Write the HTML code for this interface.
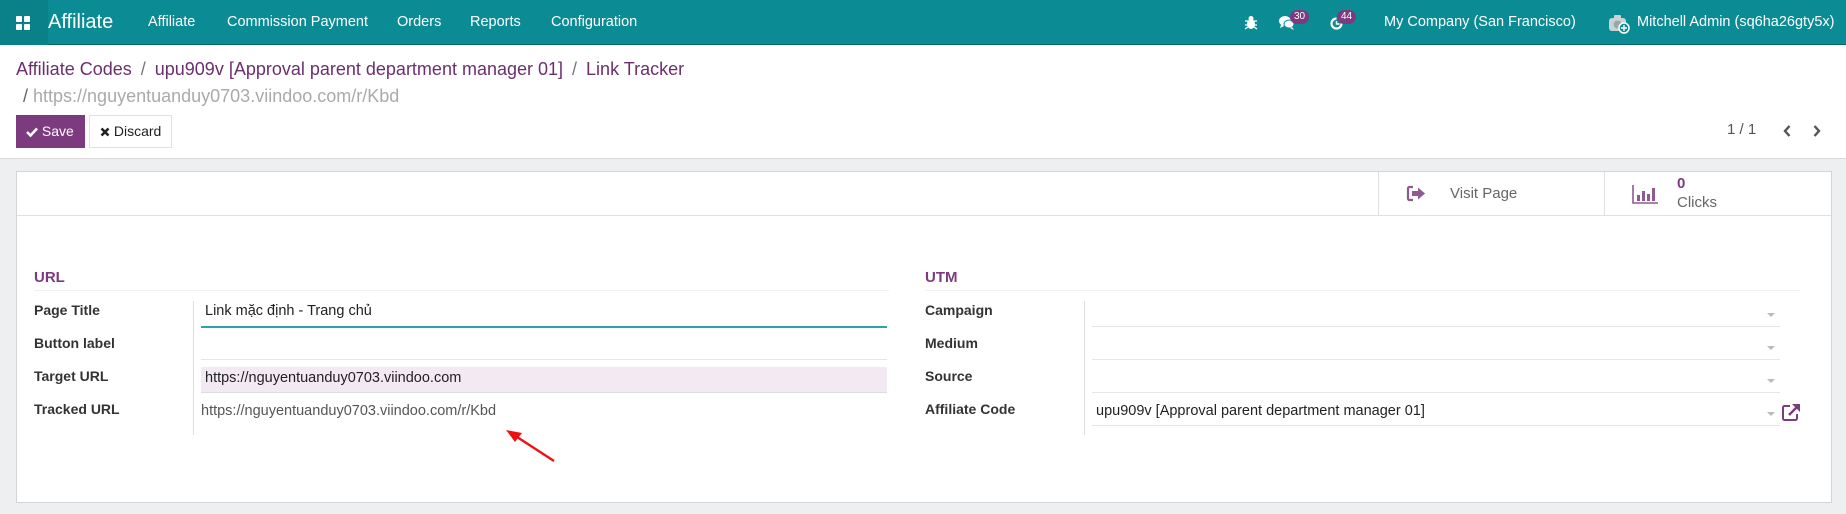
<!DOCTYPE html>
<html><head><meta charset="utf-8"><style>
*{box-sizing:border-box;margin:0;padding:0}
body{width:1846px;height:514px;overflow:hidden;background:#fff;font-family:"Liberation Sans","Noto Sans CJK SC",sans-serif;color:#4c4c4c;position:relative}
.a{position:absolute;white-space:nowrap}
.nav{position:absolute;left:0;top:0;width:1846px;height:45px;background:#0b8c95;border-bottom:1px solid #08666c}
.nav .m{color:#fff;font-size:14.5px;top:14px}
.badge{position:absolute;background:#7c3b7e;color:#fff;font-size:10px;border-radius:8px;padding:1px 4px;line-height:12px}
.lbl{font-size:14px;color:#333;font-weight:bold;left:34px}
.sep{position:absolute;height:1px;background:#e6e6e6}
.caret{position:absolute;width:0;height:0;border-left:4px solid transparent;border-right:4px solid transparent;border-top:4px solid #bbb}
.sl{color:#777;margin:0 9px}
</style></head><body>
<div class="nav">
  <div class="a" style="left:0;top:0;width:48px;height:45px;background:#0a8088"></div>
  <div class="a" style="left:16px;top:16px;width:6px;height:6px;background:#fff;border-radius:1px"></div>
  <div class="a" style="left:24px;top:16px;width:6px;height:6px;background:#fff;border-radius:1px"></div>
  <div class="a" style="left:16px;top:24px;width:6px;height:6px;background:#fff;border-radius:1px"></div>
  <div class="a" style="left:24px;top:24px;width:6px;height:6px;background:#fff;border-radius:1px"></div>
  <div class="a" style="left:48px;top:11px;color:#fff;font-size:20px">Affiliate</div>
  <div class="a m" style="left:148px">Affiliate</div>
  <div class="a m" style="left:227px">Commission Payment</div>
  <div class="a m" style="left:397px">Orders</div>
  <div class="a m" style="left:470px">Reports</div>
  <div class="a m" style="left:551px">Configuration</div>
  <svg class="a" style="left:1244px;top:15px" width="14" height="15" viewBox="0 0 14 15"><ellipse cx="7" cy="9" rx="4" ry="5" fill="#fff"/><circle cx="7" cy="3.5" r="2.5" fill="#fff"/><path d="M1 6h3M10 6h3M1 10h3M10 10h3M1 14l3-2M13 14l-3-2" stroke="#fff" stroke-width="1.3"/></svg>
  <svg class="a" style="left:1278px;top:14px" width="18" height="17" viewBox="0 0 18 17"><ellipse cx="7" cy="7" rx="6" ry="5" fill="#fff"/><path d="M3 11l-1 3 4-2z" fill="#fff"/><ellipse cx="11" cy="10" rx="5" ry="4" fill="#fff" stroke="#0b8c95" stroke-width="1"/><path d="M14 13l2 3-4-2z" fill="#fff"/></svg>
  <div class="badge" style="left:1290px;top:10px">30</div>
  <svg class="a" style="left:1329px;top:16px" width="15" height="15" viewBox="0 0 15 15"><path d="M12.5 7.5A5 5 0 1 1 7.5 2.5" stroke="#fff" stroke-width="2.2" fill="none"/><path d="M7.5 5v3h3" stroke="#fff" stroke-width="1.5" fill="none"/></svg>
  <div class="badge" style="left:1337px;top:10px">44</div>
  <div class="a m" style="left:1384px">My Company (San Francisco)</div>
  <svg class="a" style="left:1609px;top:14px" width="22" height="20" viewBox="0 0 22 20"><rect x="0" y="4" width="17" height="13" rx="3" fill="#c9d3d6"/><rect x="5" y="1" width="7" height="5" rx="1" fill="#c9d3d6"/><circle cx="8.5" cy="10.5" r="4" fill="#9aa8ac"/><circle cx="15" cy="14" r="5" fill="#0b8c95" stroke="#fff" stroke-width="1.5"/><path d="M15 11v6M12 14h6" stroke="#fff" stroke-width="1.4"/></svg>
  <div class="a m" style="left:1637px">Mitchell Admin (sq6ha26gty5x)</div>
</div>

<div class="a" style="left:16px;top:59px;font-size:18px;color:#6b2f6d">Affiliate Codes<span class="sl">/</span>upu909v [Approval parent department manager 01]<span class="sl">/</span>Link Tracker</div>
<div class="a" style="left:23px;top:86px;font-size:18px;color:#aaa"><span style="color:#666">/</span> https://nguyentuanduy0703.viindoo.com/r/Kbd</div>

<div class="a" style="left:16px;top:115px;width:69px;height:33px;background:#7c3b7e;color:#fff;font-size:14px;line-height:33px;padding-left:10px">
<svg width="12" height="10" viewBox="0 0 12 10" style="vertical-align:-1px"><path d="M1 5l3.5 3.5L11 1.5" stroke="#fff" stroke-width="2.6" fill="none"/></svg> Save</div>
<div class="a" style="left:89px;top:115px;width:83px;height:33px;background:#fff;border:1px solid #dee2e6;color:#222;font-size:14px;line-height:31px;padding-left:10px">
<svg width="10" height="10" viewBox="0 0 10 10" style="vertical-align:-1px"><path d="M1.5 1.5l7 7M8.5 1.5l-7 7" stroke="#222" stroke-width="2.6"/></svg> Discard</div>
<div class="a" style="left:1727px;top:121px;font-size:15px;color:#555">1 / 1</div>
<svg class="a" style="left:1782px;top:124px" width="10" height="14" viewBox="0 0 10 14"><path d="M7.5 2L3 7l4.5 5" stroke="#555" stroke-width="2.4" fill="none"/></svg>
<svg class="a" style="left:1812px;top:124px" width="10" height="14" viewBox="0 0 10 14"><path d="M2.5 2L7 7l-4.5 5" stroke="#555" stroke-width="2.4" fill="none"/></svg>

<div class="a" style="left:0;top:158px;width:1846px;height:356px;background:#eeeff0;border-top:1px solid #dcdcdc"></div>
<div class="a" style="left:16px;top:171px;width:1816px;height:332px;background:#fff;border:1px solid #d5d5d5"></div>
<div class="sep" style="left:17px;top:215px;width:1814px;background:#e0e0e0"></div>
<div class="a" style="left:1378px;top:172px;width:1px;height:43px;background:#e0e0e0"></div>
<div class="a" style="left:1604px;top:172px;width:1px;height:43px;background:#e0e0e0"></div>
<svg class="a" style="left:1406px;top:185px" width="21" height="17" viewBox="0 0 21 17"><path d="M7 2H3.5A1.5 1.5 0 0 0 2 3.5v10A1.5 1.5 0 0 0 3.5 15H7" stroke="#8e5a90" stroke-width="2.2" fill="none"/><path d="M6 6h6V2.5l7 6-7 6V11H6z" fill="#8e5a90"/></svg>
<div class="a" style="left:1450px;top:185px;font-size:15px;color:#666">Visit Page</div>
<svg class="a" style="left:1632px;top:185px" width="26" height="19" viewBox="0 0 26 19"><path d="M1 0v18h25" stroke="#8e5a90" stroke-width="1.6" fill="none"/><rect x="5" y="10" width="3" height="6" fill="#8e5a90"/><rect x="10" y="6" width="3" height="10" fill="#8e5a90"/><rect x="15" y="9" width="3" height="7" fill="#8e5a90"/><rect x="20" y="3" width="3" height="13" fill="#8e5a90"/></svg>
<div class="a" style="left:1677px;top:175px;font-size:15px;color:#7c3b7e;font-weight:bold">0</div>
<div class="a" style="left:1677px;top:194px;font-size:15px;color:#666">Clicks</div>

<div class="a" style="left:34px;top:269px;font-size:15px;color:#7c3b7e;font-weight:bold">URL</div>
<div class="sep" style="left:34px;top:290px;width:855px;background:#f0f0f0"></div>
<div class="a" style="left:193px;top:301px;width:1px;height:134px;background:#ddd"></div>
<div class="a lbl" style="top:302px">Page Title</div>
<div class="a lbl" style="top:335px">Button label</div>
<div class="a lbl" style="top:368px">Target URL</div>
<div class="a lbl" style="top:401px">Tracked URL</div>
<div class="a" style="left:205px;top:303px;font-size:14.5px;color:#222">Link mặc định - Trang chủ</div>
<div class="sep" style="left:201px;top:326px;width:686px;height:2px;background:#2fa3a9"></div>
<div class="sep" style="left:201px;top:359px;width:686px"></div>
<div class="a" style="left:201px;top:367px;width:686px;height:26px;background:#f3e9f3;border-bottom:1px solid #ddd"></div>
<div class="a" style="left:205px;top:370px;font-size:14.5px;color:#222">https://nguyentuanduy0703.viindoo.com</div>
<div class="a" style="left:201px;top:403px;font-size:14.5px;color:#555">https://nguyentuanduy0703.viindoo.com/r/Kbd</div>
<svg class="a" style="left:500px;top:425px" width="60" height="40" viewBox="0 0 60 40"><path d="M54 36L14 10" stroke="#e11" stroke-width="2.4"/><path d="M6 5l16 3-7 9z" fill="#e11"/></svg>

<div class="a" style="left:925px;top:269px;font-size:15px;color:#7c3b7e;font-weight:bold">UTM</div>
<div class="sep" style="left:925px;top:290px;width:875px;background:#f0f0f0"></div>
<div class="a" style="left:1084px;top:301px;width:1px;height:134px;background:#ddd"></div>
<div class="a lbl" style="left:925px;top:302px">Campaign</div>
<div class="a lbl" style="left:925px;top:335px">Medium</div>
<div class="a lbl" style="left:925px;top:368px">Source</div>
<div class="a lbl" style="left:925px;top:401px">Affiliate Code</div>
<div class="sep" style="left:1092px;top:326px;width:688px"></div>
<div class="sep" style="left:1092px;top:359px;width:688px"></div>
<div class="sep" style="left:1092px;top:392px;width:688px"></div>
<div class="sep" style="left:1092px;top:425px;width:688px"></div>
<div class="caret" style="left:1767px;top:313px"></div>
<div class="caret" style="left:1767px;top:346px"></div>
<div class="caret" style="left:1767px;top:379px"></div>
<div class="caret" style="left:1767px;top:412px"></div>
<div class="a" style="left:1096px;top:403px;font-size:14.5px;color:#222">upu909v [Approval parent department manager 01]</div>
<svg class="a" style="left:1781px;top:403px" width="20" height="19" viewBox="0 0 20 19"><path d="M9 3H3.5A1.5 1.5 0 0 0 2 4.5v11A1.5 1.5 0 0 0 3.5 17h11a1.5 1.5 0 0 0 1.5-1.5V11" stroke="#7c3b7e" stroke-width="2" fill="none"/><path d="M8 12l9-9" stroke="#7c3b7e" stroke-width="2.4"/><path d="M11 1h8v8z" fill="#7c3b7e"/></svg>
</body></html>
